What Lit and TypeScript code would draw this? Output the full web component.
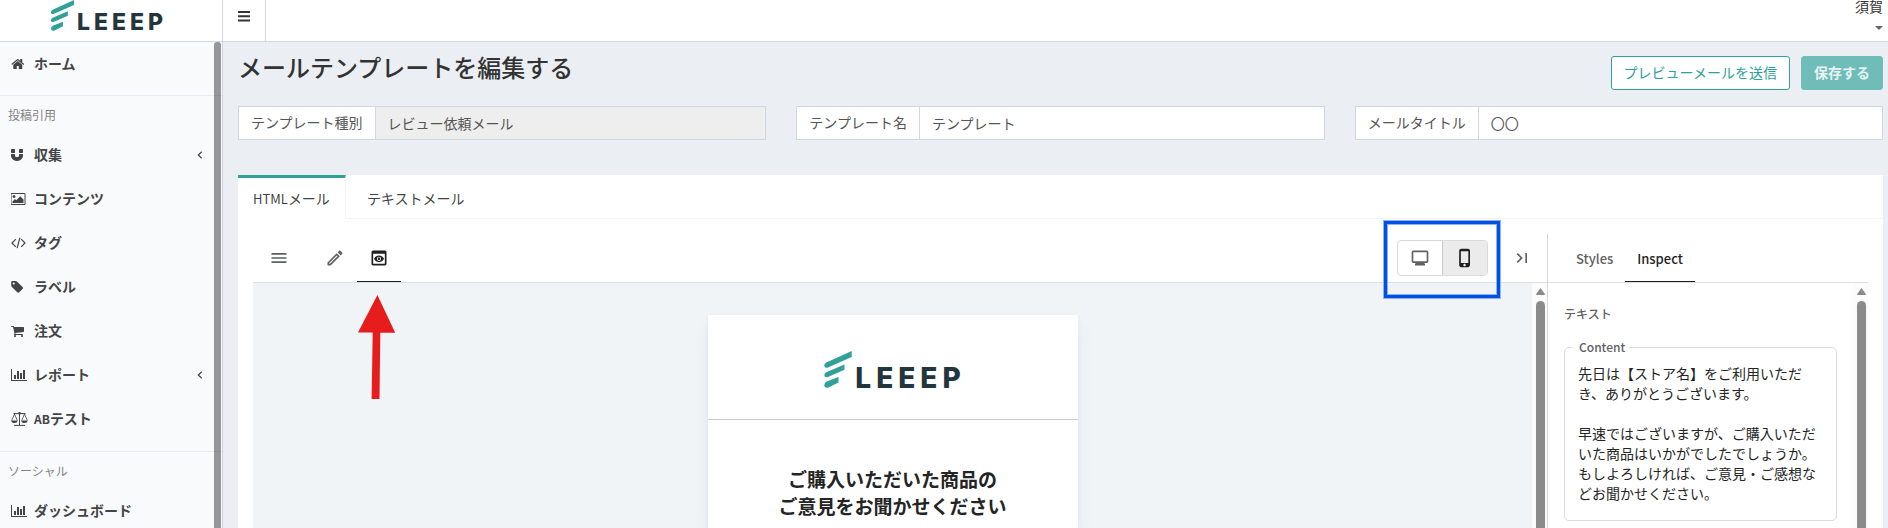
import { LitElement, html, css, svg, nothing } from "lit";
import { customElement, property, state } from "lit/decorators.js";
import { classMap } from "lit/directives/class-map.js";

const base = css`
  *, *::before, *::after { box-sizing: border-box; }
  button, input, textarea { font: inherit; color: inherit; margin: 0; border-radius: 0; }
  button { border: 0; background: none; padding: 0; cursor: pointer; }
  a { color: inherit; text-decoration: none; }
  svg { display: block; flex: none; }
`;

type Glyph = { w: number; box: string; body: unknown };

const navGlyphs: Record<string, Glyph> = {
  home: { w: 14, box: "30 0 1792 1792", body: svg`<path d="M1472 992v480q0 26-19 45t-45 19h-384v-384h-256v384h-384q-26 0-45-19t-19-45v-480q0-1 .5-3t.5-3l575-474 575 474q1 2 1 6zm223-69l-62 74q-8 9-21 11h-3q-13 0-21-7l-692-577-692 577q-12 8-24 7-13-2-21-11l-62-74q-8-10-7-23.5t11-21.5l719-599q32-26 76-26t76 26l244 204v-195q0-14 9-23t23-9h192q14 0 23 9t9 23v408l219 182q10 8 11 21.5t-7 23.5z"/>` },
  magnet: { w: 14, box: "128 0 1792 1792", body: svg`<path d="M1664 832v128q0 201-98.5 362t-274 251.5-395.5 90.5-395.5-90.5-274-251.5-98.5-362v-128q0-26 19-45t45-19h384q26 0 45 19t19 45v128q0 52 23.5 90t53.5 57 71 30 64 13 44 2 44-2 64-13 71-30 53.5-57 23.5-90v-128q0-26 19-45t45-19h384q26 0 45 19t19 45zm-1024-640v384q0 26-19 45t-45 19h-384q-26 0-45-19t-19-45v-384q0-26 19-45t45-19h384q26 0 45 19t19 45zm1024 0v384q0 26-19 45t-45 19h-384q-26 0-45-19t-19-45v-384q0-26 19-45t45-19h384q26 0 45 19t19 45z"/>` },
  image: { w: 15, box: "0 0 1920 1792", body: svg`<path d="M576 576q0 80-56 136t-136 56-136-56-56-136 56-136 136-56 136 56 56 136zm1024 384v448h-1408v-192l320-320 160 160 512-512zm96-704h-1600q-13 0-22.5 9.5t-9.5 22.5v1216q0 13 9.5 22.5t22.5 9.5h1600q13 0 22.5-9.5t9.5-22.5v-1216q0-13-9.5-22.5t-22.5-9.5zm160 32v1216q0 66-47 113t-113 47h-1600q-66 0-113-47t-47-113v-1216q0-66 47-113t113-47h1600q66 0 113 47t47 113z"/>` },
  code: { w: 15, box: "0 0 15 14", body: svg`<path fill="none" stroke="currentColor" stroke-width="1.2" d="M4.8 3.2L1 7l3.8 3.8M10.2 3.2L14 7l-3.8 3.8M8.9 1.8L6.1 12.2"/>` },
  tag: { w: 14, box: "100 0 1792 1792", body: svg`<path d="M576 448q0-53-37.5-90.5t-90.5-37.5-90.5 37.5-37.5 90.5 37.5 90.5 90.5 37.5 90.5-37.5 37.5-90.5zm1067 576q0 53-37 90l-491 492q-39 37-91 37-53 0-90-37l-715-716q-38-37-64.5-101t-26.5-117v-416q0-52 38-90t90-38h416q53 0 117 26.5t102 64.5l715 714q37 39 37 91z"/>` },
  cart: { w: 14, box: "64 0 1792 1792", body: svg`<path d="M704 1536q0 52-38 90t-90 38-90-38-38-90 38-90 90-38 90 38 38 90zm896 0q0 52-38 90t-90 38-90-38-38-90 38-90 90-38 90 38 38 90zm128-1088v512q0 24-16.5 42.5t-40.5 21.5l-1044 122q13 60 13 70 0 16-24 64h920q26 0 45 19t19 45-19 45-45 19h-1024q-26 0-45-19t-19-45q0-11 8-31.5t16-36 21.5-40 15.5-29.5l-177-823h-204q-26 0-45-19t-19-45 19-45 45-19h256q16 0 28.5 6.5t19.5 15.5 13 24.5 8 26 5.5 29.5 4.5 26h1201q26 0 45 19t19 45z"/>` },
  chart: { w: 16, box: "0 0 2048 1792", body: svg`<path d="M640 896v512h-256v-512h256zm384-512v1024h-256v-1024h256zm1024 1152v128h-2048v-1536h128v1408h1920zm-640-896v768h-256v-768h256zm384-384v1152h-256v-1152h256z"/>` },
  scale: { w: 17, box: "0 0 17 14", body: svg`<g fill="none" stroke="currentColor"><path d="M8.5 1v12M3 13.4h11M2.500 1.600h12"/><path stroke-width=".8" d="M3.500 2L.7 8.500M3.500 2l2.800 6.500M13.500 2l-2.800 6.500M13.500 2l2.800 6.500"/></g><path d="M.2 8.400h6.600q-.5 2.600-3.300 2.600T.2 8.400zm10 0h6.600q-.5 2.600-3.300 2.600t-3.300-2.600z"/><circle cx="8.500" cy="1.300" r="1.300"/>` },
};

const toolGlyphs: Record<string, string> = {
  menu: "M3 18h18v-2H3v2zm0-5h18v-2H3v2zm0-7v2h18V6H3z",
  edit: "M14.060 9.020l.92.92L5.920 19H5v-.92l9.060-9.060M17.660 3c-.25 0-.51.1-.7.29l-1.830 1.830 3.750 3.750 1.830-1.830c.39-.39.39-1.020 0-1.410l-2.340-2.340c-.2-.2-.45-.29-.71-.29zm-3.600 3.190L3 17.250V21h3.750L17.810 9.940l-3.750-3.750z",
  preview: "M19 3H5c-1.110 0-2 .9-2 2v14c0 1.100.89 2 2 2h14c1.100 0 2-.9 2-2V5c0-1.100-.89-2-2-2zm0 16H5V7h14v12zm-5.500-6c0 .83-.67 1.500-1.500 1.500s-1.500-.67-1.500-1.500.67-1.500 1.500-1.500 1.500.67 1.500 1.500zM12 9c-2.730 0-5.060 1.660-6 4 .94 2.340 3.270 4 6 4s5.060-1.660 6-4c-.94-2.340-3.270-4-6-4zm0 6.500c-1.380 0-2.500-1.120-2.500-2.500s1.120-2.500 2.500-2.500 2.500 1.120 2.500 2.500-1.120 2.500-2.500 2.500z",
  monitor: "M20 3H4c-1.100 0-2 .9-2 2v11c0 1.100.9 2 2 2h3l-1 1v2h12v-2l-1-1h3c1.100 0 2-.9 2-2V5c0-1.100-.9-2-2-2zm0 13H4V5h16v11z",
  phone: "M15.500 1h-8C6.120 1 5 2.120 5 3.500v17C5 21.880 6.120 23 7.500 23h8c1.380 0 2.500-1.120 2.500-2.500v-17C18 2.120 16.880 1 15.500 1zm-4 21c-.83 0-1.500-.67-1.500-1.500s.67-1.500 1.500-1.500 1.500.67 1.500 1.500-.67 1.500-1.500 1.500zm4.500-4H7V4h9v14z",
  last: "M5.590 7.410L10.180 12l-4.590 4.590L7 18l6-6-6-6zM16 6h2v12h-2z",
};

const toolIcon = (name: string) =>
  html`<svg width="20" height="20" viewBox="0 0 24 24" fill="currentColor" aria-hidden="true"><path d=${toolGlyphs[name]} /></svg>`;

@customElement("leeep-logo")
class LeeepLogo extends LitElement {
  @property({ reflect: true }) size = "small";
  static styles = [base, css`
    :host { display: inline-flex; align-items: flex-end; gap: 3px; color: #23353d; }
    .mark { width: 23px; height: 31px; }
    .word { font: 800 23px/17px "Inter", sans-serif; letter-spacing: 4px; margin-right: -4px; }
    :host([size="large"]) .mark { width: 28px; height: 37px; }
    :host([size="large"]) .word { font-size: 28px; line-height: 20px; letter-spacing: 5px; margin-right: -5px; }
  `];
  render() {
    return html`<svg class="mark" viewBox="0 0 83 112" fill="#2fa199" aria-hidden="true">
        <path d="M0 44Q0 38 6 35L83 0V18L11 50Q0 53 0 44z"/>
        <path d="M0 73Q0 67 6 64L61 41V57L11 79Q0 82 0 73z"/>
        <path d="M0 104Q0 97 6 93L43 79V95L11 111Q0 113 0 104z"/>
      </svg><span class="word">LEEEP</span>`;
  }
}

@customElement("scroll-rail")
class ScrollRail extends LitElement {
  static styles = [base, css`
    :host { flex: 0 0 15px; display: flex; flex-direction: column; align-items: center; gap: 6px; padding: 5px 0 0 2px; background: #fbfbfb; color: #8b8b8b; }
    .thumb { flex: 1; width: 9px; border-radius: 5px 5px 0 0; background: currentColor; }
  `];
  render() {
    return html`<svg width="9" height="7" viewBox="0 0 9 7" fill="currentColor"><path d="M4.500 0L9 6.200Q9 7 8.200 7H.8Q0 7 0 6.200z"/></svg><div class="thumb"></div>`;
  }
}

@customElement("side-nav")
class SideNav extends LitElement {
  static styles = [base, css`
    :host { flex: 0 0 223px; display: flex; overflow: hidden; border-right: 1px solid #d2d6de; background: #f9fafc; color: #444; }
    nav { flex: 1; min-width: 0; margin-right: -8px; }
    .group { border-top: 1px solid #ebeef1; }
    .group:first-child { border: 0; padding-bottom: 9px; }
    .group:not(:first-child) { padding-bottom: 10px; }
    .heading { margin: 0; padding: 10px 8px 9px; font-size: 12px; line-height: 18px; font-weight: 400; color: #848484; }
    .link { display: flex; align-items: center; height: 44px; padding: 0 19px 0 11px; font-weight: 700; gap: 5px; }
    .icon { flex: 0 0 18px; }
    .text { flex: 1; padding-bottom: 2px; }
    .latin { font-size: 12px; }
    .thumb { flex: 0 0 7px; margin-right: 1px; border-radius: 3px 3px 0 0; background: rgba(0, 0, 0, .4); z-index: 1; }
  `];
  groups = [
    { items: [["home", "ホーム"]] },
    { title: "投稿引用", items: [["magnet", "収集", "more"], ["image", "コンテンツ"], ["code", "タグ"], ["tag", "ラベル"], ["cart", "注文"], ["chart", "レポート", "more"], ["scale", "ABテスト"]] },
    { title: "ソーシャル", items: [["chart", "ダッシュボード"]] },
  ] as { title?: string; items: string[][] }[];

  label(text: string) {
    return text.startsWith("AB") ? html`<span class="latin">AB</span>${text.slice(2)}` : text;
  }
  render() {
    return html`<nav>
      ${this.groups.map((g) => html`<div class="group">
        ${g.title ? html`<h2 class="heading">${g.title}</h2>` : nothing}
        ${g.items.map(([icon, text, more]) => html`<a class="link" href="#">
          <span class="icon"><svg width=${navGlyphs[icon].w} height="14" viewBox=${navGlyphs[icon].box} fill="currentColor" aria-hidden="true">${navGlyphs[icon].body}</svg></span>
          <span class="text">${this.label(text)}</span>
          ${more ? html`<svg width="6" height="8" viewBox="0 0 6 8" fill="none" stroke="currentColor" stroke-width="1.2"><path d="M4.700.7L1.300 4l3.400 3.300"/></svg>` : nothing}
        </a>`)}
      </div>`)}
    </nav><div class="thumb"></div>`;
  }
}

@customElement("mail-editor")
class MailEditor extends LitElement {
  @state() mode = "preview";
  @state() device = "phone";
  @state() tab = "Inspect";
  static styles = [base, css`
    :host { flex: 1; min-height: 0; display: flex; color: #242424; }
    .stage { flex: 1; min-width: 0; display: flex; flex-direction: column; }
    .bar { flex: 0 0 49px; display: flex; align-items: stretch; border-bottom: 1px solid #dcdee0; color: #5f6062; }
    .tools { padding: 0 15px 0 16px; gap: 24px; }
    .tools > button { display: flex; align-items: center; }
    .tabs { display: flex; flex: 1; }
    .tab { display: flex; align-items: center; justify-content: center; padding: 0 12px; border-bottom: 1px solid transparent; font-size: 14px; font-weight: 500; }
    .tab.on { color: #1f1f1f; border-color: #1f1f1f; }
    .props { padding-left: 16px; }
    .props .tab { padding-top: 2px; font-size: 13px; }
    .devices { position: relative; z-index: 1; align-self: center; display: flex; height: 36px; border: 1px solid #dadada; border-radius: 4px; }
    .device { width: 44px; display: flex; align-items: center; justify-content: center; }
    .device + .device { width: 45px; border-left: 1px solid #c9c9c9; }
    .device.on { background: #ebebeb; color: #1f1f1f; border-radius: 0 3px 3px 0; }
    .marker { position: absolute; inset: -20px -13px -23px -14px; border: 3px solid #0050e6; box-shadow: 0 0 0 1px #8fb2f3, inset 0 0 0 1px #8fb2f3; pointer-events: none; }
    .canvas { flex: 1; min-height: 0; display: flex; position: relative; background: #f0f4f7; }
    .page { flex: 1; min-width: 0; padding-top: 32px; overflow: hidden; }
    .card { width: 100%; max-width: 370px; height: 100%; margin: 0 auto; background: #fff; box-shadow: 0 10px 20px rgba(33, 36, 67, .04), 0 2px 6px rgba(33, 36, 67, .04), 0 0 1px rgba(33, 36, 67, .04); }
    .brand { display: flex; justify-content: center; padding: 36px 0 31px; border-bottom: 1px solid #ccc; }
    .headline { margin: 0; padding-top: 45px; text-align: center; font-size: 19px; line-height: 27px; font-weight: 700; }
    .arrow { position: absolute; left: 104px; top: 12px; }
    .panel { flex: 0 0 321px; display: flex; flex-direction: column; border-left: 1px solid #d6d8da; }
    .scroll { flex: 1; min-height: 0; display: flex; overflow: hidden; }
    .form { flex: 1; min-width: 0; padding: 22px 16px; }
    .kind { margin: 0 0 18px; font-size: 12px; line-height: 18px; font-weight: 500; color: #5f6062; }
    .box { margin: 0; padding: 10px 14px 17px 8px; min-width: 0; border: 1px solid #d9dbdd; border-radius: 5px; }
    .legend { padding: 0 4px 0 6px; font-size: 12px; line-height: 12px; font-weight: 500; color: #5f6062; }
    .legend label { display: block; font-size: 12px; }
    .content { display: block; width: 100%; height: 140px; padding: 0 0 0 5px; border: 0; outline: 0; resize: none; overflow: hidden; background: none; font-size: 14px; line-height: 20px; }
  `];
  text = "先日は【ストア名】をご利用いただき、ありがとうございます。\n\n早速ではございますが、ご購入いただいた商品はいかがでしたでしょうか。もしよろしければ、ご意見・ご感想などお聞かせください。";

  render() {
    return html`<section class="stage">
      <div class="bar tools">
        <button aria-label="メニュー">${toolIcon("menu")}</button>
        <div class="tabs">
          ${["edit", "preview"].map((m) => html`<button class=${classMap({ tab: true, on: this.mode === m })} aria-label=${m} @click=${() => (this.mode = m)}>${toolIcon(m)}</button>`)}
        </div>
        <div class="devices">
          ${["monitor", "phone"].map((d) => html`<button class=${classMap({ device: true, on: this.device === d })} aria-label=${d} @click=${() => (this.device = d)}>${toolIcon(d)}</button>`)}
          <div class="marker"></div>
        </div>
        <button class="collapse" aria-label="閉じる">${toolIcon("last")}</button>
      </div>
      <div class="canvas">
        <div class="page"><div class="card">
          <div class="brand"><leeep-logo size="large"></leeep-logo></div>
          <h2 class="headline">ご購入いただいた商品の<br />ご意見をお聞かせください</h2>
        </div></div>
        <scroll-rail></scroll-rail>
        <svg class="arrow" width="40" height="106" viewBox="0 0 40 106" fill="#e71c1c" aria-hidden="true"><path d="M20.400 0L38.200 37.700H23.300L22.500 104H14.600L15.700 37.500H1z"/></svg>
      </div>
    </section>
    <aside class="panel">
      <div class="bar props">
        ${["Styles", "Inspect"].map((t) => html`<button class=${classMap({ tab: true, on: this.tab === t })} @click=${() => (this.tab = t)}>${t}</button>`)}
      </div>
      <div class="scroll">
        <div class="form">
          <p class="kind">テキスト</p>
          <fieldset class="box">
            <legend class="legend"><label for="content">Content</label></legend>
            <textarea id="content" class="content" .value=${this.text}></textarea>
          </fieldset>
        </div>
        <scroll-rail></scroll-rail>
      </div>
    </aside>`;
  }
}

@customElement("app-root")
class AppRoot extends LitElement {
  static styles = [base, css`
    :host { display: flex; flex-direction: column; height: 100vh; overflow: hidden; background: #ebeff4; color: #333; font: 400 14px/20px "Noto Sans CJK JP", sans-serif; }
    .top { flex: 0 0 42px; display: flex; background: #fff; border-bottom: 1px solid #d2d6de; }
    .logo { flex: 0 0 223px; display: flex; justify-content: center; align-items: flex-start; padding-right: 8px; border-right: 1px solid #d2d6de; }
    .toggle { display: flex; padding: 9px 14px 0; border-right: 1px solid #d2d6de; }
    .user { margin-left: auto; margin-right: 5px; display: flex; flex-direction: column; align-items: flex-end; gap: 14px; line-height: 12px; }
    .caret { border: 4px solid transparent; border-top-color: #666; border-bottom: 0; }
    .body { flex: 1; min-height: 0; display: flex; }
    main { flex: 1; min-width: 0; display: flex; flex-direction: column; padding: 14px 5px 0 15px; }
    .head { display: flex; align-items: flex-start; gap: 11px; margin-bottom: 16px; }
    h1 { flex: 1; margin: 0; font-size: 24px; line-height: 22px; font-weight: 500; }
    .btn { height: 34px; padding: 0 12px 2px; border: 1px solid #2fa199; border-radius: 3px; background: #fff; color: #2fa199; }
    .btn.save { border-color: #70bcb8; background: #70bcb8; color: #e6f4f3; font-weight: 700; }
    .fields { display: grid; grid-template-columns: repeat(3, 1fr); gap: 30px; margin-bottom: 35px; color: #555; }
    .field { display: flex; height: 34px; border: 1px solid #d2d6de; background: #fff; }
    .field label { padding: 4px 12px 0; line-height: 22px; border-right: 1px solid #d2d6de; white-space: nowrap; }
    .field input { flex: 1; min-width: 0; padding: 0 12px; border: 0; outline: 0; background: none; }
    .field input:read-only { background: #eee; }
    .card { flex: 1; min-height: 0; display: flex; flex-direction: column; background: #fff; }
    .strip { flex: 0 0 44px; display: flex; gap: 6px; border-bottom: 1px solid #f4f4f4; color: #444; }
    .strip a { padding: 10px 15px 0; border-top: 3px solid transparent; }
    .strip .on { margin-bottom: -1px; background: #fff; border-top-color: #2fa199; border-right: 1px solid #f4f4f4; }
    .latin { font-size: 13px; }
    .content { flex: 1; min-height: 0; display: flex; padding: 15px 15px 0; }
  `];
  render() {
    return html`<header class="top">
      <a class="logo" href="#"><leeep-logo></leeep-logo></a>
      <button class="toggle" aria-label="メニュー切替"><svg width="14" height="14" viewBox="0 0 14 14" fill="#333"><path d="M1 2h12v2H1zM1 6.200h12v2H1zM1 10.400h12v2H1z"/></svg></button>
      <button class="user"><span>須賀</span><span class="caret"></span></button>
    </header>
    <div class="body">
      <side-nav></side-nav>
      <main>
        <div class="head">
          <h1>メールテンプレートを編集する</h1>
          <button class="btn">プレビューメールを送信</button>
          <button class="btn save">保存する</button>
        </div>
        <div class="fields">
          <div class="field"><label for="kind">テンプレート種別</label><input id="kind" readonly value="レビュー依頼メール" /></div>
          <div class="field"><label for="name">テンプレート名</label><input id="name" value="テンプレート" /></div>
          <div class="field"><label for="title">メールタイトル</label><input id="title" value="〇〇" /></div>
        </div>
        <div class="card">
          <div class="strip">
            <a class="on" href="#"><span class="latin">HTML</span>メール</a>
            <a href="#">テキストメール</a>
          </div>
          <div class="content"><mail-editor></mail-editor></div>
        </div>
      </main>
    </div>`;
  }
}
